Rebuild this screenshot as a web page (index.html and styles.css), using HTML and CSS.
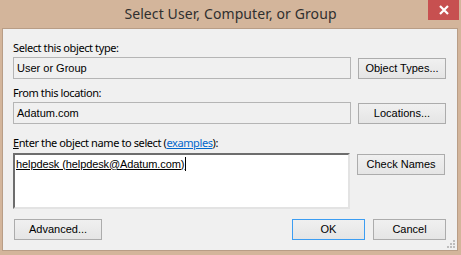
FILE: index.html
```html
<!DOCTYPE html>
<html lang="en">
<head>
  <meta charset="UTF-8">
  <title>Select User, Computer, or Group</title>
  <link rel="stylesheet" href="styles.css">
</head>
<body>
  <div class="window">
    <div class="titlebar">
      <span class="title">Select User, Computer, or Group</span>
      <button class="close" title="Close">
        <svg width="12" height="10" viewBox="0 0 12 10">
          <path d="M2 1 L10 9 M10 1 L2 9" stroke="#fff" stroke-width="2.2" fill="none"/>
        </svg>
      </button>
    </div>

    <div class="client">
      <div class="label">Select this object type:</div>
      <div class="row">
        <div class="box">User or Group</div>
        <button class="btn side">Object Types...</button>
      </div>

      <div class="label gap">From this location:</div>
      <div class="row">
        <div class="box">Adatum.com</div>
        <button class="btn side">Locations...</button>
      </div>

      <div class="label gap-lg"><u>E</u>nter the object name to select (<a href="#" class="link">examples</a>):</div>
      <div class="row tall">
        <div class="names"><u>helpdesk (helpdesk@Adatum.com)</u><span class="caret"></span></div>
        <button class="btn side">Check Names</button>
      </div>

      <div class="actions">
        <button class="btn wide">Advanced...</button>
        <div class="spacer"></div>
        <button class="btn small default">OK</button>
        <button class="btn small">Cancel</button>
      </div>

      <svg class="grip" width="9" height="9" viewBox="0 0 9 9">
        <rect x="6" y="0" width="2" height="2" fill="#bdbdbd"/>
        <rect x="3" y="3" width="2" height="2" fill="#bdbdbd"/>
        <rect x="6" y="3" width="2" height="2" fill="#bdbdbd"/>
        <rect x="0" y="6" width="2" height="2" fill="#bdbdbd"/>
        <rect x="3" y="6" width="2" height="2" fill="#bdbdbd"/>
        <rect x="6" y="6" width="2" height="2" fill="#bdbdbd"/>
      </svg>
    </div>
  </div>
</body>
</html>
```

FILE: styles.css
```css
body {
  margin: 0;
  font-family: 'Noto Sans', Arial, sans-serif;
  background-color: #d3b59b;
}
.window {
  width: 461px;
  height: 255px;
  display: flex;
  flex-direction: column;
  background-color: #d3b59b;
}
.titlebar {
  position: relative;
  height: 29px;
  display: flex;
  align-items: center;
  justify-content: center;
}
.title {
  font-size: 14px;
  color: #2f2f2f;
  margin-top: -1px;
  letter-spacing: 0.1px;
}
.close {
  position: absolute;
  top: 0;
  right: 2px;
  width: 31px;
  height: 20px;
  border: none;
  padding: 0;
  background-color: #c75050;
  display: flex;
  align-items: center;
  justify-content: center;
}
.client {
  position: relative;
  margin: 0 3px 4px 2px;
  height: 220px;
  border: 1px solid #b89d86;
  background-color: #f0f0f0;
  padding: 11px 11px 0 10px;
  font-size: 12px;
}
.label {
  height: 16px;
  line-height: 16px;
  color: #000;
  margin-bottom: 1px;
  font-family: 'Noto Sans', Arial, sans-serif;
  font-size: 11px;
  letter-spacing: -0.4px;
}
.label.gap {
  margin-top: 6px;
}
.label.gap-lg {
  margin-top: 11px;
  margin-bottom: 2px;
}
.link {
  color: #0066cc;
}
.row {
  display: flex;
  gap: 7px;
  align-items: flex-start;
}
.box {
  box-sizing: border-box;
  width: 338px;
  height: 22px;
  border: 1px solid #b5b5b5;
  background-color: #f0f0f0;
  padding: 0 3px;
  line-height: 20px;
  font-family: 'Liberation Sans', Arial, sans-serif;
  font-size: 11px;
}
.names {
  box-sizing: border-box;
  width: 337px;
  height: 56px;
  border-top: 2px solid #6d6d6d;
  border-left: 2px solid #6d6d6d;
  border-right: 2px solid #e3e3e3;
  border-bottom: 2px solid #e3e3e3;
  background-color: #fff;
  padding: 2px 1px;
  font-family: 'Liberation Sans', Arial, sans-serif;
  font-size: 11px;
  line-height: 14px;
  letter-spacing: -0.1px;
}
.caret {
  display: inline-block;
  width: 1px;
  height: 14px;
  vertical-align: top;
  background-color: #000;
  margin-left: 1px;
}
.btn {
  box-sizing: border-box;
  height: 21px;
  border: 1px solid #acacac;
  background: linear-gradient(#f0f0f0, #e5e5e5);
  font-family: 'Liberation Sans', Arial, sans-serif;
  font-size: 11px;
  color: #000;
  padding: 0;
}
.btn.side {
  width: 88px;
  margin-top: 1px;
}
.btn.wide {
  width: 88px;
  margin-left: 1px;
}
.btn.small {
  width: 73px;
}
.btn.default {
  border-color: #3c9df2;
}
.actions {
  display: flex;
  gap: 8px;
  margin-top: 10px;
}
.spacer {
  flex: 1;
}
.grip {
  position: absolute;
  right: 1px;
  bottom: 1px;
}
```
